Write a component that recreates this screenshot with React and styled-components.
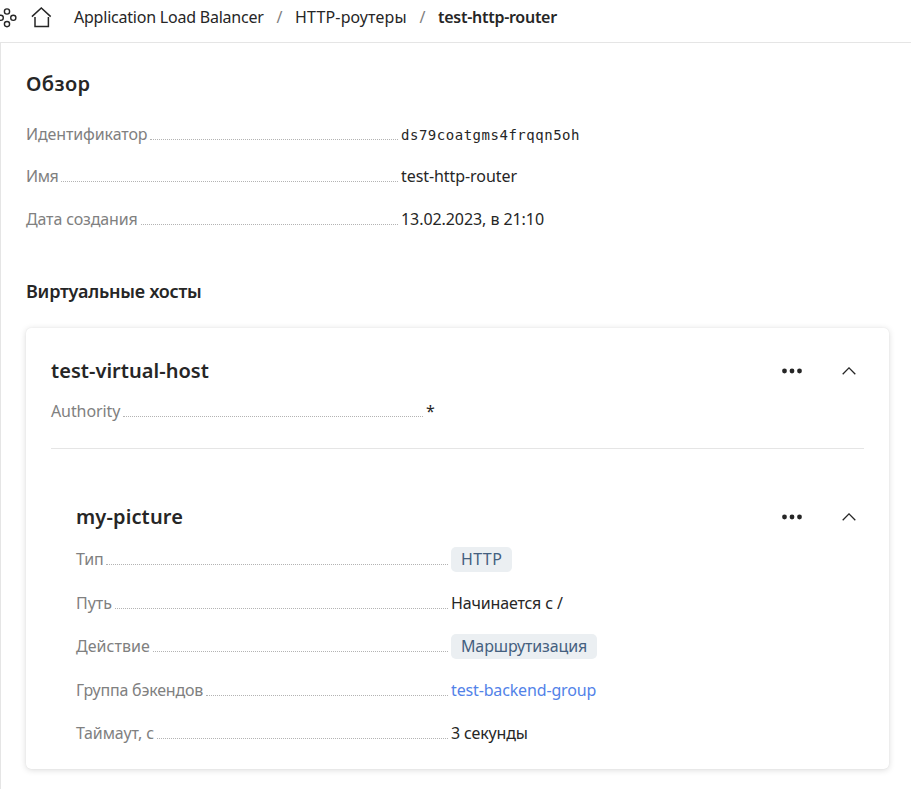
import React from 'react';
import styled, { createGlobalStyle } from 'styled-components';

const GlobalStyle = createGlobalStyle`
  * { box-sizing: border-box; }
  body {
    margin: 0;
    background: #fff;
    color: #262626;
    font: 16px/24px "Noto Sans", "Open Sans", sans-serif;
    overflow: hidden;
  }
`;

const Page = styled.div`
  display: flex;
  flex-direction: column;
  height: 789px;
`;

const Header = styled.header`
  display: flex;
  align-items: center;
  height: 43px;
  padding-bottom: 8px;
  border-bottom: 1px solid #e5e5e5;
`;

const ServicesIcon = styled.svg`
  flex: none;
  width: 18px;
  height: 22px;
`;

const HomeIcon = styled.svg`
  flex: none;
  width: 22px;
  height: 22px;
  margin: 0 22px 0 12px;
`;

const Crumb = styled.span`
  width: ${(p) => p.$width}px;
  white-space: nowrap;
  font-weight: ${(p) => (p.$current ? 600 : 400)};
  letter-spacing: ${(p) => p.$track || 0}px;
`;

const Slash = styled.span`
  width: 31px;
  text-align: center;
  color: #808080;
`;

const Main = styled.main`
  flex: 1;
  padding: 29px 22px 0 25px;
  border-left: 1px solid #e5e5e5;
`;

const Title = styled.h1`
  margin: 0 0 25.9px;
  font-size: 20px;
  line-height: 24px;
  font-weight: 600;
  letter-spacing: 0.4px;
`;

const Subtitle = styled.h2`
  margin: 48.1px 0 25px;
  font-size: 18px;
  line-height: 24px;
  font-weight: 600;
  letter-spacing: -0.23px;
`;

const Definitions = styled.dl`
  display: flex;
  flex-direction: column;
  gap: ${(p) => p.$gap}px;
  margin: 0;
`;

const Row = styled.div`
  display: flex;
  align-items: center;
  height: 24px;
`;

const Term = styled.dt`
  display: flex;
  align-items: flex-end;
  width: 375px;
  height: 24px;
  padding-right: 3px;
  color: #808080;
  white-space: nowrap;
  letter-spacing: ${(p) => p.$track || 0}px;
`;

const Leader = styled.span`
  flex: 1;
  margin: 0 0 6px 3px;
  border-bottom: 1px dotted #b3b3b3;
`;

const Value = styled.dd`
  margin: 0;
  white-space: nowrap;
  letter-spacing: ${(p) => p.$track || 0}px;
`;

const Code = styled.code`
  display: block;
  padding-top: 2px;
  font: 14px/24px "DejaVu Sans Mono", monospace;
  letter-spacing: 0.52px;
`;

const Tag = styled.span`
  display: block;
  height: 25px;
  margin-top: 1px;
  padding: 0 10px;
  border-radius: 5px;
  background: #ebeff2;
  color: #44607f;
`;

const Link = styled.a`
  color: #5282e8;
  text-decoration: none;
`;

const Card = styled.section`
  height: 441px;
  padding: 31px 25px 0;
  border-radius: 5px;
  background: #fff;
  box-shadow: 0 0 1px rgba(0, 0, 0, 0.1), 0 1px 6px rgba(0, 0, 0, 0.15);
`;

const CardHead = styled.div`
  display: flex;
  align-items: center;
  height: 24px;
  margin-bottom: ${(p) => p.$after}px;
`;

const CardTitle = styled.h3`
  flex: 1;
  margin: 0;
  font-size: 20px;
  line-height: 24px;
  font-weight: 600;
  letter-spacing: ${(p) => p.$track}px;
`;

const IconButton = styled.button`
  display: flex;
  align-items: center;
  justify-content: center;
  width: 30px;
  height: 24px;
  padding: 0;
  border: 0;
  background: none;
  color: #262626;
  & + & { margin-left: 27px; }
`;

const Divider = styled.hr`
  height: 1px;
  margin: 25px 0 56px;
  border: 0;
  background: #e5e5e5;
`;

const Route = styled.div`
  padding-left: 25px;
`;

function Item({ label, track, valueTrack, children }) {
  return (
    <Row>
      <Term $track={track}>{label}<Leader /></Term>
      <Value $track={valueTrack}>{children}</Value>
    </Row>
  );
}

function Actions() {
  return (
    <>
      <IconButton aria-label="Действия">
        <svg width="20" height="6" viewBox="0 0 20 6" fill="currentColor">
          <circle cx="2.5" cy="3" r="2.4" />
          <circle cx="10" cy="3" r="2.4" />
          <circle cx="17.5" cy="3" r="2.4" />
        </svg>
      </IconButton>
      <IconButton aria-label="Свернуть">
        <svg width="14" height="8" viewBox="0 0 14 8" fill="none" stroke="currentColor" strokeWidth="1.3">
          <path d="M.7 7.2 7 .9l6.3 6.3" />
        </svg>
      </IconButton>
    </>
  );
}

export default function App() {
  return (
    <Page>
      <GlobalStyle />
      <Header>
        <ServicesIcon viewBox="0 0 18 22" fill="none" stroke="#262626" strokeWidth="1.4">
          <circle cx="7" cy="5.5" r="2.6" />
          <circle cx="0.7" cy="11.8" r="2.6" />
          <circle cx="13.3" cy="11.8" r="2.6" />
          <circle cx="7" cy="18.1" r="2.6" />
        </ServicesIcon>
        <HomeIcon viewBox="0 0 22 22" fill="none" stroke="#262626" strokeWidth="1.5">
          <path d="M1.9 10.6 11.3 2l9.4 8.6M5 11v9.5h13.4V11" />
        </HomeIcon>
        <Crumb $width={190} $track={-0.22}>Application Load Balancer</Crumb>
        <Slash>/</Slash>
        <Crumb $width={112} $track={0.17}>HTTP-роутеры</Crumb>
        <Slash>/</Slash>
        <Crumb $width={122} $track={-0.27} $current>test-http-router</Crumb>
      </Header>
      <Main>
        <Title>Обзор</Title>
        <Definitions $gap={18.5}>
          <Item label="Идентификатор" track={-0.12}><Code>ds79coatgms4frqqn5oh</Code></Item>
          <Item label="Имя" track={-0.4} valueTrack={-0.07}>test-http-router</Item>
          <Item label="Дата создания" track={-0.15} valueTrack={-0.07}>13.02.2023, в 21:10</Item>
        </Definitions>
        <Subtitle>Виртуальные хосты</Subtitle>
        <Card>
          <CardHead $after={16}>
            <CardTitle $track={0.04}>test-virtual-host</CardTitle>
            <Actions />
          </CardHead>
          <Definitions $gap={0}>
            <Item label="Authority" track={-0.1}>*</Item>
          </Definitions>
          <Divider />
          <Route>
            <CardHead $after={18.15}>
              <CardTitle $track={0.14}>my-picture</CardTitle>
              <Actions />
            </CardHead>
            <Definitions $gap={19.5}>
              <Item label="Тип" track={-0.2} valueTrack={0.4}><Tag>HTTP</Tag></Item>
              <Item label="Путь" valueTrack={-0.16}>Начинается с /</Item>
              <Item label="Действие" track={0.05} valueTrack={-0.14}><Tag>Маршрутизация</Tag></Item>
              <Item label="Группа бэкендов" track={-0.2} valueTrack={-0.15}><Link>test-backend-group</Link></Item>
              <Item label="Таймаут, с" track={-0.14} valueTrack={-0.15}>3 секунды</Item>
            </Definitions>
          </Route>
        </Card>
      </Main>
    </Page>
  );
}
